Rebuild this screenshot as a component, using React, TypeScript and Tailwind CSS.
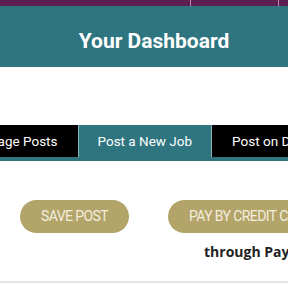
import React from 'react';

const tabs = ['Manage Posts', 'Post a New Job', 'Post on Demand'];

export default function App() {
    return (
        <div className="w-[288px] h-[288px] overflow-hidden bg-white font-['Roboto',sans-serif]">
            {/* top strip */}
            <div className="flex h-[6px] bg-[#5c1f4f]">
                <div className="w-[191px] border-r border-[#b889a8]" />
                <div className="w-[88px] border-r border-[#b889a8]" />
            </div>

            <div className="flex h-[61px] items-center justify-center bg-[#2e7580] pl-[20px] pt-[10px]">
                <h1 className="text-[21px] font-bold text-white">Your Dashboard</h1>
            </div>

            <div className="mt-[58px] flex w-max border-b-4 border-[#2e7580] -ml-[49px]">
                {tabs.map((t, i) => (
                    <div
                        key={t}
                        className={
                            i === 1
                                ? 'flex h-[32px] items-center whitespace-nowrap border-x border-[#8fb5bb] bg-[#2e7580] px-[19px] text-[13.5px] text-white'
                                : 'flex h-[32px] items-center whitespace-nowrap bg-black px-[20px] text-[13.5px] text-white'
                        }
                    >
                        {t}
                    </div>
                ))}
            </div>

            <div className="mt-[39px] flex w-max gap-[39px] pl-[20px]">
                <button className="h-[33px] w-[109px] shrink-0 whitespace-nowrap rounded-full bg-[#b3a46a] text-[14px] tracking-[-0.6px] text-[#f3eedf]">
                    SAVE POST
                </button>
                <div className="flex shrink-0 flex-col items-start">
                    <button className="h-[33px] shrink-0 whitespace-nowrap rounded-full bg-[#b3a46a] px-[21px] text-[14px] tracking-[-0.6px] text-[#f3eedf]">
                        PAY BY CREDIT CARD
                    </button>
                    <p className="mt-[8px] whitespace-nowrap pl-[36px] font-['Open_Sans',sans-serif] text-[14px] font-bold text-[#222]">
                        through Pay Pal
                    </p>
                </div>
            </div>

            <div className="mt-[19px] border-t-2 border-[#e4e4e4]" />
        </div>
    );
}
